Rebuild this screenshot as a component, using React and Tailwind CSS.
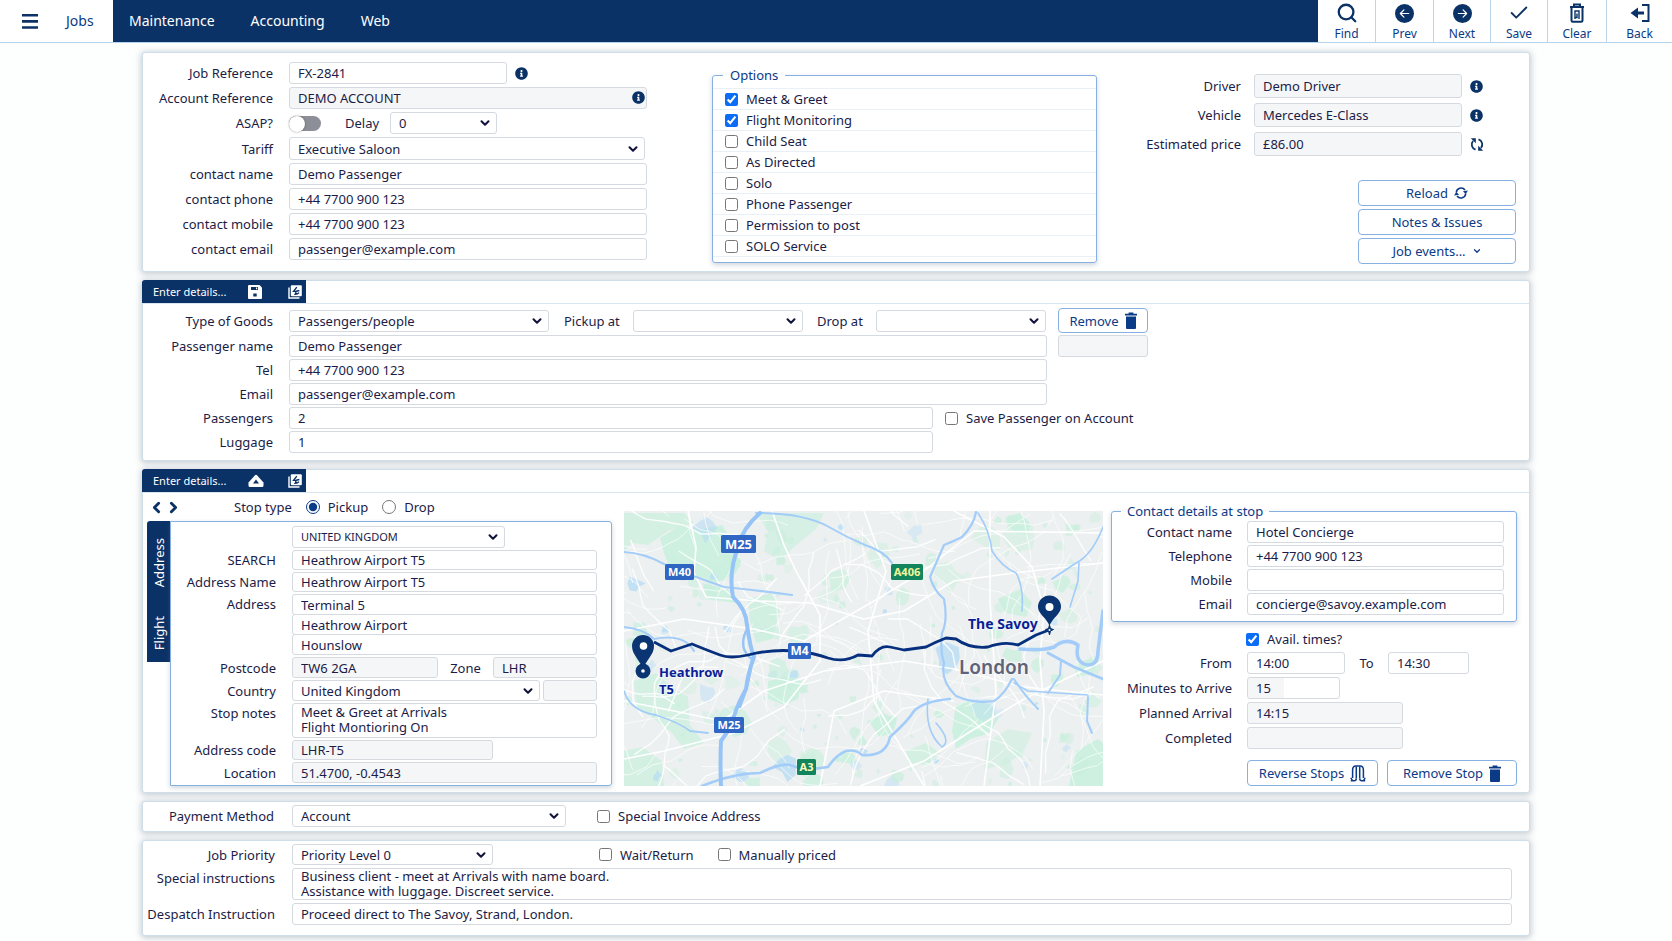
import React from "react";
import { Search, Check, ChevronDown, ChevronLeft, ChevronRight } from "lucide-react";
import { BsArrowLeftCircleFill, BsArrowRightCircleFill } from "react-icons/bs";
import { FaInfoCircle } from "react-icons/fa";

/* ---------- icons ---------- */

function ClearIcon() {
  return (
    <svg width="18" height="20" viewBox="0 0 18 20" fill="none" stroke="currentColor" strokeWidth="2" aria-hidden="true">
      <path d="M2 4h14M6 3.5V1.5h6v2" />
      <path d="M3.500 4.5v13q0 1.3 1.3 1.3h8.4q1.3 0 1.3-1.3v-13" />
      <path d="M7 16V8h4v8M9 10.5v4h-1.4" strokeWidth="1.4" />
    </svg>
  );
}

function BackIcon() {
  return (
    <svg width="20" height="20" viewBox="0 0 20 20" fill="none" stroke="currentColor" strokeWidth="2" aria-hidden="true">
      <path d="M12 2h6.5v16H12" />
      <path d="M7 10h7" strokeWidth="3" />
      <path d="M0.5 10 8 4.4v11.2z" fill="currentColor" stroke="none" />
    </svg>
  );
}

function TrashSolid() {
  return (
    <svg width="12" height="17" viewBox="0 0 12 17" fill="currentColor" aria-hidden="true">
      <path d="M3.600 1.800V.4h4.800v1.400H12v1.800H0V1.800zM1 4.600h10V16q0 1-1 1H2q-1 0-1-1z" />
    </svg>
  );
}

function SyncIcon() {
  return (
    <svg width="14" height="15" viewBox="0 0 14 15" fill="none" stroke="currentColor" strokeWidth="1.800" aria-hidden="true">
      <path d="M5.500 12.600A5.400 5.400 0 0 1 3 4" />
      <path d="M8.500 2.400A5.400 5.400 0 0 1 11 11" />
      <path d="M0.800 1.200h5v5z" fill="currentColor" stroke="none" />
      <path d="M13.200 13.800h-5v-5z" fill="currentColor" stroke="none" />
    </svg>
  );
}

function ReloadIcon() {
  return (
    <svg width="14" height="14" viewBox="0 0 14 14" fill="none" stroke="currentColor" strokeWidth="1.600" aria-hidden="true">
      <path d="M2.300 6.500A4.800 4.800 0 0 1 11 4" />
      <path d="M11.700 7.500A4.800 4.800 0 0 1 3 10" />
      <path d="M14 4.600 11.700 8 8.900 5.200z" fill="currentColor" stroke="none" />
      <path d="M0 9.400 2.300 6l2.800 2.800z" fill="currentColor" stroke="none" />
    </svg>
  );
}

function ReverseIcon() {
  return (
    <svg width="16" height="17" viewBox="0 0 16 17" fill="none" stroke="currentColor" strokeWidth="1.500" strokeLinejoin="round" aria-hidden="true">
      <path d="M2.600 13V5Q2.600 1 6 1h4q3.400 0 3.400 4v8" />
      <path d="M6.300 1.500v12M9.700 1.500v12" />
      <path d="M.800 15.800h3.300q2.200 0 2.200-2.300M15.200 15.800h-3.300q-2.200 0-2.200-2.300M.800 12.800l1.700 2.800M15.200 12.800l-1.700 2.800" />
    </svg>
  );
}

function DiskIcon() {
  return (
    <svg width="14" height="14" viewBox="0 0 14 14" aria-hidden="true">
      <path d="M1 0h10.500L14 2.500V13q0 1-1 1H1q-1 0-1-1V1q0-1 1-1z" fill="#fff" />
      <path d="M3 2h7v3H3zM5.300 8.500h3.400v3H5.300z" fill="#0b3266" />
      <path d="M8 2.500h1.200v1.800H8z" fill="#fff" />
    </svg>
  );
}

function HomeUpIcon() {
  return (
    <svg width="16" height="14" viewBox="0 0 16 14" aria-hidden="true">
      <path d="M7 1.200q1-1 2 0L15.500 8.500v3q0 1.500-1.500 1.500H2q-1.500 0-1.500-1.500v-3z" fill="#fff" />
      <path d="M8 5.500 11 9.500H5z" fill="#0b3266" />
    </svg>
  );
}

function CopyIcon() {
  return (
    <svg width="14" height="14" viewBox="0 0 14 14" aria-hidden="true">
      <path d="M1 2.500V13h10.500" fill="none" stroke="#fff" strokeWidth="1.400" />
      <rect x="2.800" y="0.300" width="11" height="11" rx="1" fill="#fff" />
      <path d="M8.800 2.200 5.600 6.400h2.200v2.800M8.200 6.300l3.200-.8M11 7.600q-1.200 2-4.800 1.800" fill="none" stroke="#0b3266" strokeWidth="1.400" />
    </svg>
  );
}

/* ---------- form parts ---------- */

const box = "block min-w-0 rounded-[3px] border border-[#d5dae1] px-2 text-[13px] text-[#1b1c47] outline-none";

function Input({ id, value, className = "w-full", h = "h-[22px]", locked = false, label }) {
  return (
    <input
      id={id}
      aria-label={label}
      defaultValue={value}
      readOnly={locked}
      className={`${box} ${h} ${className} ${locked ? "bg-[#f5f6f7]" : "bg-white"}`}
    />
  );
}

function Select({ id, options, className = "w-full", h = "h-[22px]", size = "text-[13px]", label }) {
  return (
    <span className={`relative block shrink-0 ${className}`}>
      <select
        id={id}
        aria-label={label}
        className={`block w-full appearance-none rounded-[3px] border border-[#d5dae1] bg-white pr-6 pl-2 text-[#1b1c47] outline-none ${h} ${size}`}
      >
        {options.map((o) => (
          <option key={o}>{o}</option>
        ))}
      </select>
      <ChevronDown size={14} strokeWidth={3.5} className="pointer-events-none absolute inset-y-0 right-[5px] my-auto text-[#12133a]" />
    </span>
  );
}

function Row({ label, id, labelWidth, gap = "gap-4", align = "items-center", children }) {
  return (
    <div className={`flex ${align} ${gap}`}>
      <label htmlFor={id} className={`shrink-0 text-right whitespace-nowrap ${labelWidth}`}>
        {label}
      </label>
      {children}
    </div>
  );
}

function Tick({ label, checked = false, gap = "gap-2" }) {
  return (
    <label className={`flex items-center whitespace-nowrap ${gap}`}>
      <input type="checkbox" defaultChecked={checked} className="size-[13px] shrink-0 accent-[#0b6cf5]" />
      {label}
    </label>
  );
}

function OutlineButton({ children, className }) {
  return (
    <button type="button" className={`flex shrink-0 items-center justify-center gap-1.5 rounded-[4px] border border-[#86b0e2] bg-white whitespace-nowrap text-[#0b3a86] ${className}`}>
      {children}
    </button>
  );
}

function Card({ children, className = "" }) {
  return (
    <section className={`rounded-[3px] border border-[#cfdfe9] bg-white shadow-[0_1px_6px_1px_rgba(95,115,130,0.36)] ${className}`}>
      {children}
    </section>
  );
}

function TabStrip({ icon, iconLabel }) {
  return (
    <div className="flex h-[23px] border-b border-[#d7e6f0]">
      <div className="-mt-px -ml-px flex w-[164px] items-center rounded-tl-[3px] bg-[#0b3266] pl-[11px] text-[11px] text-white">
        <span className="w-[95px]">Enter details...</span>
        <button type="button" aria-label={iconLabel} className="flex w-[40px]">{icon}</button>
        <button type="button" aria-label="Duplicate"><CopyIcon /></button>
      </div>
    </div>
  );
}

/* ---------- header ---------- */

const tools = [
  { name: "Find", width: "w-[58px]", icon: <Search size={22} strokeWidth={2.5} /> },
  { name: "Prev", width: "w-[58px]", icon: <BsArrowLeftCircleFill size={19} /> },
  { name: "Next", width: "w-[57px]", icon: <BsArrowRightCircleFill size={19} /> },
  { name: "Save", width: "w-[57px]", icon: <Check size={22} strokeWidth={2} /> },
  { name: "Clear", width: "w-[59px]", icon: <ClearIcon /> },
  { name: "Back", width: "w-[65px]", icon: <BackIcon /> },
];

function Header() {
  return (
    <header className="flex h-[43px] border-b border-[#b5d3ea] bg-[#0b3266]">
      <div className="flex w-[113px] shrink-0 items-center bg-white pl-[22px] text-[#0b3a86]">
        <button type="button" aria-label="Menu" className="mr-7">
          <svg width="16" height="15" viewBox="0 0 16 15" fill="#0b3266" aria-hidden="true">
            <path d="M0 0h16v2.600H0zM0 6.100h16v2.600H0zM0 12.200h16v2.600H0z" />
          </svg>
        </button>
        <a href="#jobs" className="text-[14px]">Jobs</a>
      </div>
      <nav className="flex flex-1 items-center gap-9 pl-4 text-[14px] text-white">
        <a href="#maintenance">Maintenance</a>
        <a href="#accounting">Accounting</a>
        <a href="#web">Web</a>
      </nav>
      <div className="flex shrink-0 bg-white text-[#0b3266]">
        {tools.map((t) => (
          <button key={t.name} type="button" className={`flex flex-col items-center border-r border-[#bfd6e8] text-[12px] leading-4 last:border-r-0 ${t.width}`}>
            <span className="flex h-[26px] items-center justify-center">{t.icon}</span>
            <span className="text-[#0b3a86]">{t.name}</span>
          </button>
        ))}
      </div>
    </header>
  );
}

/* ---------- map ---------- */

function seeded(seed) {
  let s = seed;
  return () => {
    s = (s * 16807) % 2147483647;
    return s / 2147483647;
  };
}

const rnd = seeded(4217);
const n1 = (v) => v.toFixed(1);

const patches = Array.from({ length: 190 }, () => {
  const x = rnd() * 479;
  const y = rnd() * 275;
  const r = 2 + rnd() * rnd() * 15;
  const pts = Array.from({ length: 8 }, (_, i) => {
    const a = (i / 8) * Math.PI * 2;
    const q = r * (0.5 + rnd() * 0.8);
    return `${n1(x + Math.cos(a) * q)},${n1(y + Math.sin(a) * q)}`;
  });
  return { pts: pts.join(" "), blue: rnd() > 0.86, o: 0.3 + rnd() * 0.5 };
});

const lanes = Array.from({ length: 150 }, () => {
  let x = rnd() * 479;
  let y = rnd() * 275;
  let a = rnd() * Math.PI * 2;
  let d = `M${n1(x)} ${n1(y)}`;
  const steps = 3 + Math.floor(rnd() * 5);
  for (let i = 0; i < steps; i++) {
    a += (rnd() - 0.5) * 1.1;
    const cx = x + Math.cos(a) * 9;
    const cy = y + Math.sin(a) * 9;
    a += (rnd() - 0.5) * 0.6;
    x = cx + Math.cos(a) * 10;
    y = cy + Math.sin(a) * 10;
    d += `Q${n1(cx)} ${n1(cy)} ${n1(x)} ${n1(y)}`;
  }
  return { d, w: rnd() > 0.75 ? 1.4 : 0.8 };
});

const roadSigns = [
  { t: "M25", x: 97, y: 24, w: 35, h: 18, s: 13, c: "#2f66c4", f: "#fff" },
  { t: "M40", x: 41, y: 53, w: 29, h: 16, s: 11, c: "#2f66c4", f: "#fff" },
  { t: "M4", x: 164, y: 132, w: 23, h: 16, s: 12, c: "#2f66c4", f: "#fff" },
  { t: "M25", x: 90, y: 206, w: 30, h: 16, s: 11, c: "#2f66c4", f: "#fff" },
  { t: "A3", x: 173, y: 248, w: 19, h: 16, s: 11, c: "#12855c", f: "#fdfcc0" },
  { t: "A406", x: 267, y: 53, w: 32, h: 16, s: 11, c: "#12855c", f: "#f4f59a" },
];

function RouteMap() {
  return (
    <svg className="block h-full w-full" viewBox="0 0 479 275" preserveAspectRatio="xMidYMid slice" role="img" aria-label="Route from Heathrow T5 to The Savoy">
      <rect width="479" height="275" fill="#edf0f0" />
      <g fill="#cdf0e0">
        <path d="M36 27 58 14 76 18 98 14 108 30 96 42 118 48 112 62 92 72 78 66 58 70 46 58 40 42z" />
        <path d="M0 2h60l10 10-26 8-20 14L8 32 0 40z" opacity=".8" />
        <path d="M132 2h68l-8 16-22 18-14 14-16-10 4-20z" opacity=".7" />
        <path d="M78 72 104 78 112 92 84 88z" />
        <path d="M124 88 148 82 156 100 148 128 132 132 126 110z" opacity=".9" />
        <path d="M144 170l18-4 16 4-4 18-14 6-16-6z" />
        <path d="M10 170 32 162 48 176 64 186 66 214 80 232 60 238 48 222 30 208 12 196z" opacity=".8" />
        <path d="M0 240l18-4 20 14 2 25H0z" opacity=".8" />
        <path d="M332 194l16-6 20 6 6 14-8 14-20 6-14 10-4-18z" />
        <path d="M245 210l14-8 14 6-4 14-14 4z" />
        <path d="M382 6l14-4 10 10-2 12-12-2-8-8z" />
        <path d="M374 88l22-10 12 14-6 14-20-4z" opacity=".9" />
        <path d="M452 240l22-12 5 4v43h-34z" />
        <path d="M282 240l20-8 14 10-12 12-20-2z" opacity=".8" />
        <path d="M205 62l14-4 8 8-6 12-14 2z" opacity=".8" />
        <path d="M362 232l22-14 24 4-8 18-18 14-22 4z" opacity=".6" />
      </g>
      {patches.map((p, i) => (
        <polygon key={i} points={p.pts} fill={p.blue ? "#b5dcf6" : "#c9efdd"} opacity={p.o} />
      ))}
      <g fill="none" stroke="#fff">
        {lanes.map((l, i) => (
          <path key={i} d={l.d} strokeWidth={l.w} opacity=".85" />
        ))}
        <g strokeWidth="1.600" strokeLinejoin="round">
          <path d="M64 0 72 36 70 62 82 86 134 90 186 92 240 108 280 100 330 70 390 62 479 52" />
          <path d="M148 0 160 34 172 60 196 104 196 150 160 196 110 222 40 240 0 248" />
          <path d="M0 190 50 200 98 210 140 180 200 160 280 150 330 158 400 176 479 184" />
          <path d="M330 0 380 26 408 56 420 98 416 150 420 200 416 275" />
          <path d="M236 275 300 250 344 222 400 188 479 150" />
          <path d="M240 0 262 60 244 120 250 190 300 275" />
          <path d="M366 0 366 90 372 180 360 275" />
          <path d="M196 275 210 200 260 180 330 190" />
          <path d="M0 120 60 108 130 118 180 130 250 90 300 60 350 20 479 22" />
        </g>
      </g>
      <g fill="none" stroke="#a3cdf8" strokeWidth="2" strokeLinecap="round" strokeLinejoin="round">
        <path d="M0 41Q20 42 40 53 70 66 100 76 140 80 168 84" strokeWidth="2.200" />
        <path d="M132 2Q180 2 205 16 222 26 241 34 260 40 268 52" />
        <path d="M352 1Q350 14 338 26 328 31 320 34L306 66Q310 80 320 88 324 110 318 122 316 140 320 152 316 170 332 185 350 193 370 190 380 184 388 168" strokeWidth="2.200" />
        <path d="M354 2Q366 20 368 40 378 56 392 62 400 76 398 100" strokeWidth="1.600" />
        <path d="M479 16Q468 44 452 52L428 68M455 52 454 70 446 96" strokeWidth="1.600" />
        <path d="M390 168Q400 184 414 198M424 182 436 164 437 150" />
        <path d="M0 180Q6 200 32 204 56 212 66 220L84 222" strokeWidth="1.800" />
        <path d="M78 275Q110 262 136 262 156 252 166 254 180 260 204 256 212 244 222 240 232 238 238 244 262 246 266 226 284 210 290 200 300 190 326 188 338 180" strokeWidth="2.600" />
        <path d="M464 186 463 210 468 222" />
        <path d="M0 116Q20 118 30 128 60 122 70 140" />
        <path d="M304 188Q300 220 318 236 328 230 312 212" strokeWidth="1.600" />
        <path d="M396 138Q420 140 430 136 442 126 454 134 450 152 464 154 474 154 474 140L479 100" strokeWidth="3.600" />
        <path d="M424 142 450 156 479 168" strokeWidth="2.800" />
        <path d="M390 172 404 180 464 184" strokeWidth="1.600" />
      </g>
      <g fill="none" stroke="#97c4f6" strokeWidth="4" strokeLinecap="round" strokeLinejoin="round">
        <path d="M136 2Q118 18 115 34 104 60 109 86 122 98 123 114 126 136 130 146 124 162 122 178 110 200 108 214L97 230Q96 250 97 275" />
        <path d="M122 120Q114 138 128 148 126 172 116 196" strokeWidth="2.400" />
      </g>
      <path d="M30 131 47 140 68 133Q80 138 96 144 106 148 124 144 146 138 172 140 190 142 204 147 220 152 234 144L248 145Q256 134 266 136L280 139 302 136Q314 130 322 127L332 128Q346 138 364 136 380 130 394 134L412 124 425 119" fill="none" stroke="#06307d" strokeWidth="2.800" strokeLinejoin="round" />
      {roadSigns.map((r) => (
        <g key={r.t + r.x}>
          <rect x={r.x} y={r.y} width={r.w} height={r.h} rx="1.500" fill={r.c} />
          <text x={r.x + r.w / 2} y={r.y + r.h / 2 + r.s * 0.36} textAnchor="middle" fontSize={r.s} fontWeight="700" fill={r.f}>{r.t}</text>
        </g>
      ))}
      <g fill="#0b3472">
        <circle cx="19" cy="160" r="7.500" />
        <path d="M19 158C16 149 8 144 8 135a11 11 0 0 1 22 0c0 9-8 14-11 23z" />
        <path d="M425.500 115C423 107 414 103 414 96a11.500 11.500 0 0 1 23 0c0 7-9 11-11.500 19z" />
        <path d="M425.500 114l1 3.500 3 1-3 1.500-1 4-1-4-3-1.500 3-1z" strokeWidth="1" stroke="#0b3472" />
      </g>
      <g fill="#fff">
        <circle cx="19.500" cy="135" r="3.800" />
        <circle cx="19" cy="160" r="1.800" />
        <circle cx="425.500" cy="96" r="4" />
        <circle cx="425.500" cy="119" r="1" />
      </g>
      <g fontWeight="700" fill="#0a1f96" stroke="#f3f6f8" strokeWidth="2" paintOrder="stroke">
        <text x="35" y="166" fontSize="13">Heathrow</text>
        <text x="35" y="183" fontSize="13">T5</text>
        <text x="344" y="118" fontSize="14">The Savoy</text>
      </g>
      <text x="335" y="163" fontSize="19" fontWeight="600" fill="#5d6379" stroke="#f3f5f6" strokeWidth="2.500" paintOrder="stroke">London</text>
    </svg>
  );
}

/* ---------- sections ---------- */

const options = [
  ["Meet & Greet", true],
  ["Flight Monitoring", true],
  ["Child Seat", false],
  ["As Directed", false],
  ["Solo", false],
  ["Phone Passenger", false],
  ["Permission to post", false],
  ["SOLO Service", false],
];

function InfoButton({ label, className = "" }) {
  return (
    <button type="button" aria-label={label} className={`shrink-0 text-[#0b3266] ${className}`}>
      <FaInfoCircle size={13} />
    </button>
  );
}

function JobCard() {
  const lw = "w-[130px]";
  return (
    <Card className="flex pb-[7px]">
      <div className="flex w-[504px] shrink-0 flex-col gap-[3px] pt-[9px]">
        <Row label="Job Reference" id="job-ref" labelWidth={lw}>
          <Input id="job-ref" value="FX-2841" className="w-[218px]" />
          <InfoButton label="Job reference info" className="-ml-2" />
        </Row>
        <Row label="Account Reference" id="acc-ref" labelWidth={lw}>
          <span className="relative flex-1">
            <Input id="acc-ref" value="DEMO ACCOUNT" locked />
            <InfoButton label="Account info" className="absolute top-1 right-[2px]" />
          </span>
        </Row>
        <div className="flex h-[22px] items-center">
          <label htmlFor="asap" className="w-[130px] text-right">ASAP?</label>
          <input
            id="asap"
            type="checkbox"
            role="switch"
            className="ml-4 h-[15px] w-8 appearance-none rounded-full bg-[#8d8f98] before:block before:size-[16px] before:rounded-full before:bg-white before:shadow-[0_0_2px_rgba(0,0,0,0.45)]"
          />
          <label htmlFor="delay" className="mr-[11px] ml-6">Delay</label>
          <Select id="delay" options={["0", "5", "10"]} className="w-[107px]" />
        </div>
        <Row label="Tariff" id="tariff" labelWidth={lw}>
          <Select id="tariff" options={["Executive Saloon"]} className="w-[356px]" h="h-[23px]" />
        </Row>
        <Row label="contact name" id="c-name" labelWidth={lw}><Input id="c-name" value="Demo Passenger" /></Row>
        <Row label="contact phone" id="c-phone" labelWidth={lw}><Input id="c-phone" value="+44 7700 900 123" /></Row>
        <Row label="contact mobile" id="c-mobile" labelWidth={lw}><Input id="c-mobile" value="+44 7700 900 123" /></Row>
        <Row label="contact email" id="c-email" labelWidth={lw}><Input id="c-email" value="passenger@example.com" /></Row>
      </div>

      <fieldset className="mt-[13px] ml-[65px] w-[385px] shrink-0 self-start rounded-[3px] border border-[#86b0e2] pb-[5px] shadow-[0_2px_5px_rgba(95,120,140,0.3)]">
        <legend className="ml-[10px] px-[7px] leading-[18px] text-[#0b3a86]">Options</legend>
        <div className="border-b border-[#e9f0f7] pt-1">
          {options.map(([name, on]) => (
            <div key={name} className="flex h-[21px] items-center border-t border-[#e9f0f7] pl-3">
              <Tick label={name} checked={on} />
            </div>
          ))}
        </div>
      </fieldset>

      <div className="ml-auto flex flex-col pt-[21px] pr-[13px]">
        <div className="flex flex-col gap-[5px] pr-8">
          {[
            ["Driver", "Demo Driver"],
            ["Vehicle", "Mercedes E-Class"],
            ["Estimated price", "£86.00"],
          ].map(([label, value], i) => (
            <div key={label} className="flex items-center justify-end">
              <label htmlFor={`side-${i}`} className="mr-[13px] whitespace-nowrap">{label}</label>
              <Input id={`side-${i}`} value={value} className="w-[208px]" h="h-6" locked />
              <button type="button" aria-label={`${label} details`} className="ml-2 flex w-[14px] text-[#0b3266]">
                {i < 2 ? <FaInfoCircle size={13} /> : <SyncIcon />}
              </button>
            </div>
          ))}
        </div>
        <div className="mt-6 flex flex-col items-end gap-[3px]">
          <OutlineButton className="h-[26px] w-[158px]">Reload <ReloadIcon /></OutlineButton>
          <OutlineButton className="h-[26px] w-[158px]">Notes &amp; Issues</OutlineButton>
          <OutlineButton className="h-[26px] w-[158px]">Job events... <ChevronDown size={10} strokeWidth={3} /></OutlineButton>
        </div>
      </div>
    </Card>
  );
}

function GoodsCard() {
  const lw = "w-[130px]";
  return (
    <Card>
      <TabStrip icon={<DiskIcon />} iconLabel="Save details" />
      <div className="flex flex-col gap-[2px] pt-1 pb-[7px]">
        <Row label="Type of Goods" id="goods" labelWidth={lw}>
          <div className="flex items-center">
            <Select id="goods" options={["Passengers/people"]} className="w-[260px]" />
            <label htmlFor="pickup-at" className="w-[84px] pl-[15px]">Pickup at</label>
            <Select id="pickup-at" options={[""]} className="w-[170px]" />
            <label htmlFor="drop-at" className="w-[73px] pl-[14px]">Drop at</label>
            <Select id="drop-at" options={[""]} className="w-[170px]" />
            <OutlineButton className="ml-3 h-[25px] w-[90px]">Remove <TrashSolid /></OutlineButton>
          </div>
        </Row>
        <Row label="Passenger name" id="p-name" labelWidth={lw}>
          <div className="flex gap-[11px]">
            <Input id="p-name" value="Demo Passenger" className="w-[758px]" />
            <Input label="Passenger code" value="" className="w-[90px]" locked />
          </div>
        </Row>
        <Row label="Tel" id="p-tel" labelWidth={lw}><Input id="p-tel" value="+44 7700 900 123" className="w-[758px]" /></Row>
        <Row label="Email" id="p-email" labelWidth={lw}><Input id="p-email" value="passenger@example.com" className="w-[758px]" /></Row>
        <Row label="Passengers" id="p-count" labelWidth={lw}>
          <Input id="p-count" value="2" className="w-[644px]" />
          <div className="-ml-1"><Tick label="Save Passenger on Account" /></div>
        </Row>
        <Row label="Luggage" id="p-lug" labelWidth={lw}><Input id="p-lug" value="1" className="w-[644px]" /></Row>
      </div>
    </Card>
  );
}

function AddressPanel() {
  const lw = "w-[105px]";
  return (
    <div className="flex w-[442px] flex-col gap-[2px] rounded-r-[3px] border border-[#86b0e2] pt-1 pr-[14px] pb-[2px] shadow-[0_2px_5px_rgba(95,120,140,0.3)]">
      <div className="pl-[121px]">
        <Select label="Region" options={["UNITED KINGDOM"]} className="w-[213px]" size="text-[11px]" />
      </div>
      <Row label="SEARCH" id="a-search" labelWidth={lw}><Input id="a-search" value="Heathrow Airport T5" h="h-5" /></Row>
      <Row label="Address Name" id="a-name" labelWidth={lw}><Input id="a-name" value="Heathrow Airport T5" h="h-5" /></Row>
      <Row label="Address" id="a-1" labelWidth={lw} align="items-start">
        <div className="flex min-w-0 flex-1 flex-col -space-y-px">
          <Input id="a-1" value="Terminal 5" h="h-[21px]" />
          <Input label="Address line 2" value="Heathrow Airport" h="h-[21px]" />
          <Input label="Address line 3" value="Hounslow" h="h-[21px]" />
        </div>
      </Row>
      <Row label="Postcode" id="a-post" labelWidth={lw}>
        <div className="flex min-w-0 flex-1 items-center">
          <Input id="a-post" value="TW6 2GA" className="w-[146px] shrink-0" h="h-[21px]" locked />
          <label htmlFor="a-zone" className="w-[55px] shrink-0 text-center">Zone</label>
          <Input id="a-zone" value="LHR" className="flex-1" h="h-[21px]" locked />
        </div>
      </Row>
      <Row label="Country" id="a-country" labelWidth={lw}>
        <div className="flex min-w-0 flex-1 gap-[3px]">
          <Select id="a-country" options={["United Kingdom"]} className="w-[248px]" h="h-[21px]" />
          <Input label="Country code" value="" className="flex-1" h="h-[21px]" locked />
        </div>
      </Row>
      <Row label="Stop notes" id="a-notes" labelWidth={lw} align="items-start">
        <textarea id="a-notes" className={`${box} h-[35px] w-full resize-none overflow-hidden bg-white pt-px leading-[15px]`} defaultValue={"Meet & Greet at Arrivals\nFlight Montioring On"} />
      </Row>
      <Row label="Address code" id="a-code" labelWidth={lw}><Input id="a-code" value="LHR-T5" className="w-[201px]" h="h-5" locked /></Row>
      <Row label="Location" id="a-loc" labelWidth={lw}><Input id="a-loc" value="51.4700, -0.4543" h="h-[21px]" locked /></Row>
    </div>
  );
}

function StopCard() {
  const lw = "w-[120px]";
  return (
    <Card>
      <TabStrip icon={<HomeUpIcon />} iconLabel="Collapse details" />
      <div className="flex pr-3 pb-[6px]">
        <div className="ml-1 shrink-0">
          <div className="flex h-7 items-center pl-px">
            <button type="button" aria-label="Previous stop" className="text-[#0b3266]"><ChevronLeft size={17} strokeWidth={4} /></button>
            <button type="button" aria-label="Next stop" className="text-[#0b3266]"><ChevronRight size={17} strokeWidth={4} /></button>
            <span className="ml-[52px]">Stop type</span>
            <label className="ml-[14px] flex items-center gap-2">
              <input type="radio" name="stop" defaultChecked className="size-[14px] accent-[#0b3a86]" />
              Pickup
            </label>
            <label className="ml-[14px] flex items-center gap-2">
              <input type="radio" name="stop" className="size-[14px] accent-[#0b3a86]" />
              Drop
            </label>
          </div>
          <div className="flex items-start">
            <div className="flex w-[23px] flex-col rounded-tl-[3px] bg-[#0b3266] text-[13px] text-white">
              <button type="button" className="flex h-[84px] items-center justify-center"><span className="rotate-180 [writing-mode:vertical-rl]">Address</span></button>
              <button type="button" className="flex h-[57px] items-center justify-center"><span className="rotate-180 [writing-mode:vertical-rl]">Flight</span></button>
            </div>
            <AddressPanel />
          </div>
        </div>

        <div className="mt-[18px] ml-3 h-[275px] min-w-0 flex-1 overflow-hidden">
          <RouteMap />
        </div>

        <div className="ml-2 w-[406px] shrink-0 pt-[9px]">
          <fieldset className="rounded-[3px] border border-[#86b0e2] pb-[6px] shadow-[0_2px_5px_rgba(95,120,140,0.3)]">
            <legend className="ml-[9px] px-[6px] leading-[18px] text-[#0b3a86]">Contact details at stop</legend>
            <div className="flex flex-col gap-[2px] pt-px pr-3">
              <Row label="Contact name" id="s-name" labelWidth={lw} gap="gap-[15px]"><Input id="s-name" value="Hotel Concierge" /></Row>
              <Row label="Telephone" id="s-tel" labelWidth={lw} gap="gap-[15px]"><Input id="s-tel" value="+44 7700 900 123" /></Row>
              <Row label="Mobile" id="s-mob" labelWidth={lw} gap="gap-[15px]"><Input id="s-mob" value="" /></Row>
              <Row label="Email" id="s-email" labelWidth={lw} gap="gap-[15px]"><Input id="s-email" value="concierge@savoy.example.com" /></Row>
            </div>
          </fieldset>
          <div className="mt-[7px] flex flex-col gap-[3px] pl-px">
            <div className="flex h-5 pl-[134px]"><Tick label="Avail. times?" checked /></div>
            <Row label="From" id="s-from" labelWidth={lw} gap="gap-[15px]">
              <div className="flex items-center">
                <Input id="s-from" value="14:00" className="w-[98px]" />
                <label htmlFor="s-to" className="w-[43px] text-center">To</label>
                <Input id="s-to" value="14:30" className="w-[81px]" />
              </div>
            </Row>
            <Row label="Minutes to Arrive" id="s-min" labelWidth={lw} gap="gap-[15px]">
              <input id="s-min" defaultValue="15" className={`${box} h-[22px] w-[93px] bg-linear-to-r from-[#f5f6f7] from-40% to-white to-40%`} />
            </Row>
            <Row label="Planned Arrival" id="s-plan" labelWidth={lw} gap="gap-[15px]"><Input id="s-plan" value="14:15" className="w-[156px]" locked /></Row>
            <Row label="Completed" id="s-done" labelWidth={lw} gap="gap-[15px]"><Input id="s-done" value="" className="w-[156px]" locked /></Row>
          </div>
          <div className="mt-[11px] flex justify-end gap-[9px]">
            <OutlineButton className="h-[26px] w-[131px]">Reverse Stops <ReverseIcon /></OutlineButton>
            <OutlineButton className="h-[26px] w-[130px]">Remove Stop <TrashSolid /></OutlineButton>
          </div>
        </div>
      </div>
    </Card>
  );
}

function PaymentCard() {
  return (
    <Card className="pt-[3px] pb-1">
      <Row label="Payment Method" id="pay" labelWidth="w-[131px]" gap="gap-[18px]">
        <div className="flex items-center gap-[31px]">
          <Select id="pay" options={["Account"]} className="w-[274px]" />
          <Tick label="Special Invoice Address" />
        </div>
      </Row>
    </Card>
  );
}

function InstructionsCard() {
  const lw = "w-[132px]";
  return (
    <Card className="flex flex-col gap-[3px] pt-[3px] pr-[17px] pb-[10px]">
      <Row label="Job Priority" id="prio" labelWidth={lw} gap="gap-[17px]">
        <div className="flex items-center">
          <Select id="prio" options={["Priority Level 0"]} className="mr-[106px] w-[201px]" h="h-[21px]" />
          <Tick label="Wait/Return" />
          <div className="ml-6"><Tick label="Manually priced" /></div>
        </div>
      </Row>
      <Row label="Special instructions" id="special" labelWidth={lw} gap="gap-[17px]" align="items-start">
        <textarea id="special" className={`${box} h-8 w-full resize-none overflow-hidden bg-white leading-[15px]`} defaultValue={"Business client - meet at Arrivals with name board.\nAssistance with luggage. Discreet service."} />
      </Row>
      <Row label="Despatch Instruction" id="despatch" labelWidth={lw} gap="gap-[17px]">
        <Input id="despatch" value="Proceed direct to The Savoy, Strand, London." />
      </Row>
    </Card>
  );
}

export default function App() {
  return (
    <div className="min-h-screen bg-[#fdfefe] font-['Noto_Sans','Open_Sans',sans-serif] text-[13px] leading-5 text-[#1b1c47]">
      <Header />
      <main className="mx-auto flex w-[83%] min-w-[1388px] flex-col gap-2 pt-[9px] pb-[5px]">
        <JobCard />
        <GoodsCard />
        <StopCard />
        <PaymentCard />
        <InstructionsCard />
      </main>
    </div>
  );
}
